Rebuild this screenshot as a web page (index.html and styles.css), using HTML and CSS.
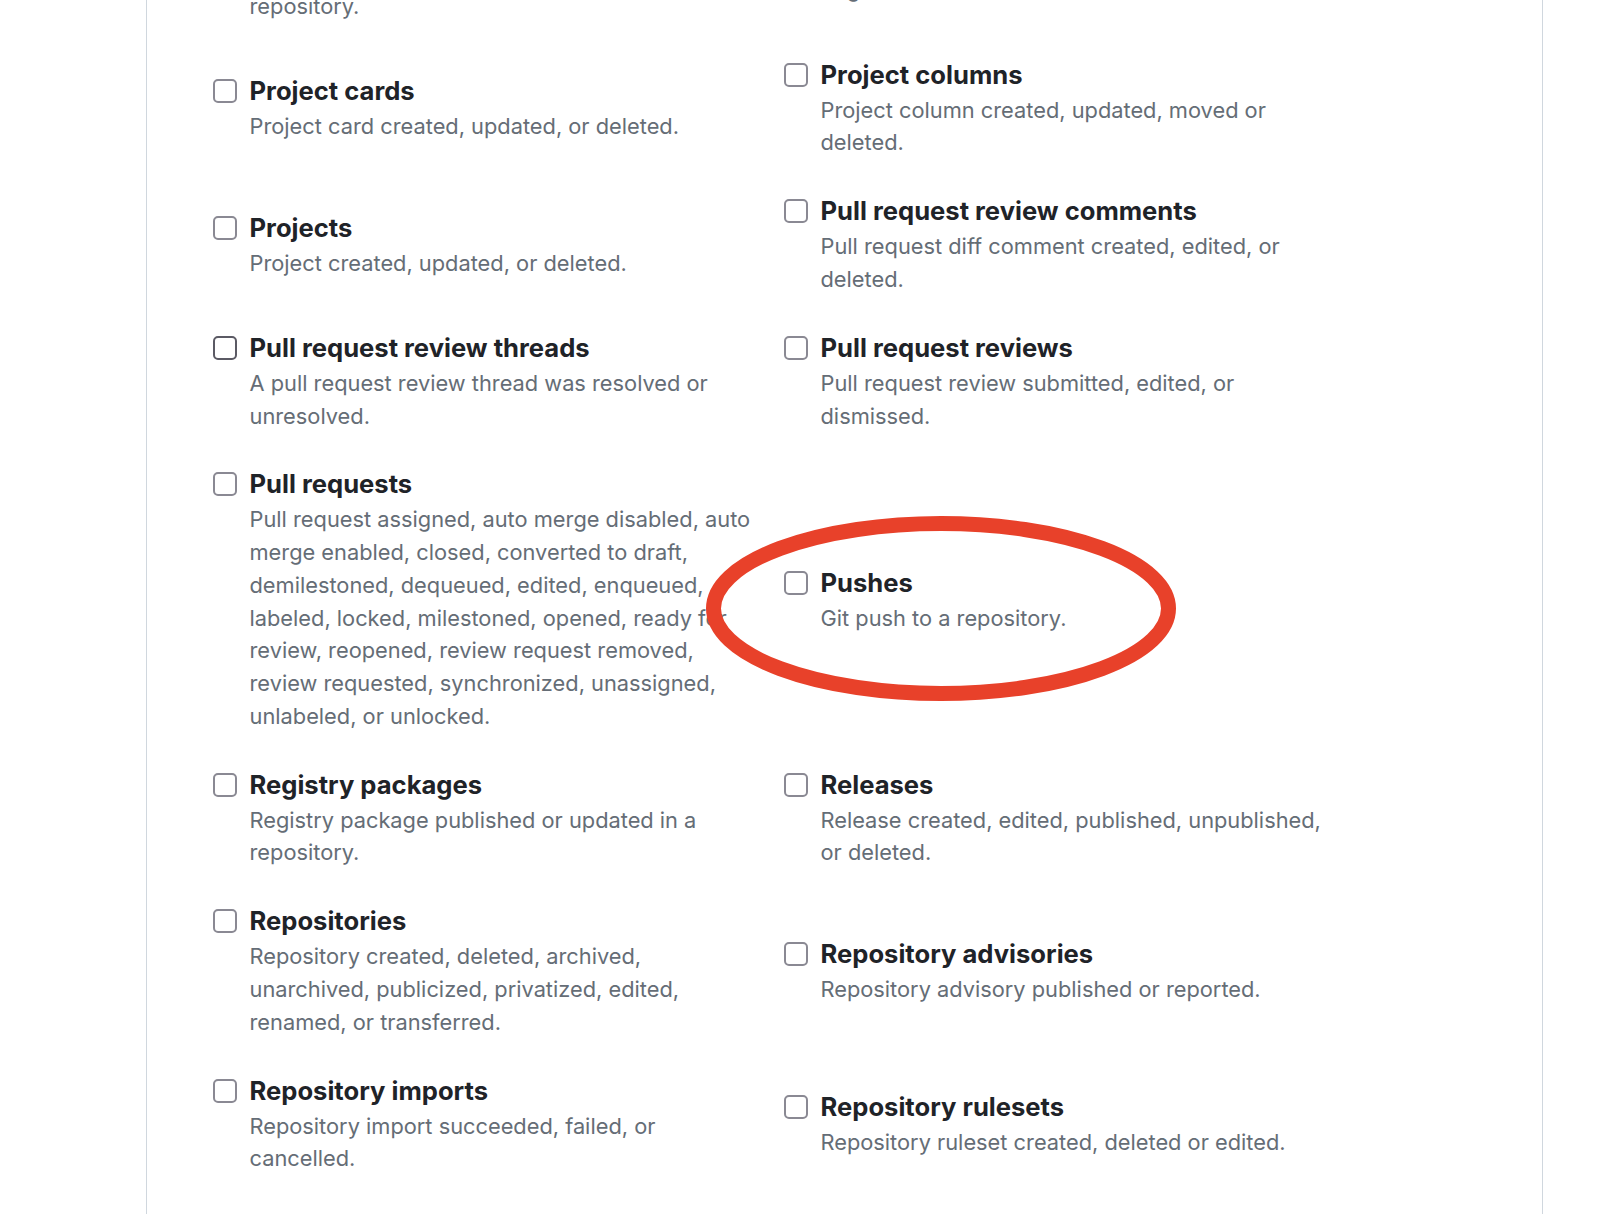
FILE: index.html
```html
<!DOCTYPE html>
<html lang="en">
<head>
<meta charset="utf-8">
<title>Webhook events</title>
<link rel="stylesheet" href="styles.css">
</head>
<body>
<div class="page">
  <div class="panel">
    <div class="events">
      <label class="event"><span class="box"></span><span class="text"><span class="name">Packages</span><span class="desc">GitHub Packages published or updated in a repository.</span></span></label>
      <label class="event"><span class="box"></span><span class="text"><span class="name">Page builds</span><span class="desc">Pages site built.</span></span></label>

      <label class="event"><span class="box"></span><span class="text"><span class="name">Project cards</span><span class="desc">Project card created, updated, or deleted.</span></span></label>
      <label class="event"><span class="box"></span><span class="text"><span class="name">Project columns</span><span class="desc">Project column created, updated, moved or deleted.</span></span></label>

      <label class="event"><span class="box"></span><span class="text"><span class="name">Projects</span><span class="desc">Project created, updated, or deleted.</span></span></label>
      <label class="event"><span class="box"></span><span class="text"><span class="name">Pull request review comments</span><span class="desc">Pull request diff comment created, edited, or deleted.</span></span></label>

      <label class="event"><span class="box box-hover"></span><span class="text"><span class="name">Pull request review threads</span><span class="desc">A pull request review thread was resolved or unresolved.</span></span></label>
      <label class="event"><span class="box"></span><span class="text"><span class="name">Pull request reviews</span><span class="desc">Pull request review submitted, edited, or dismissed.</span></span></label>

      <label class="event"><span class="box"></span><span class="text"><span class="name">Pull requests</span><span class="desc">Pull request assigned, auto merge disabled, auto merge enabled, closed, converted to draft, demilestoned, dequeued, edited, enqueued, labeled, locked, milestoned, opened, ready for review, reopened, review request removed, review requested, synchronized, unassigned, unlabeled, or unlocked.</span></span></label>
      <label class="event"><span class="box"></span><span class="text"><span class="name">Pushes</span><span class="desc">Git push to a repository.</span></span></label>

      <label class="event"><span class="box"></span><span class="text"><span class="name">Registry packages</span><span class="desc">Registry package published or updated in a repository.</span></span></label>
      <label class="event"><span class="box"></span><span class="text"><span class="name">Releases</span><span class="desc">Release created, edited, published, unpublished, or deleted.</span></span></label>

      <label class="event"><span class="box"></span><span class="text"><span class="name">Repositories</span><span class="desc">Repository created, deleted, archived, unarchived, publicized, privatized, edited, renamed, or transferred.</span></span></label>
      <label class="event"><span class="box"></span><span class="text"><span class="name">Repository advisories</span><span class="desc">Repository advisory published or reported.</span></span></label>

      <label class="event"><span class="box"></span><span class="text"><span class="name">Repository imports</span><span class="desc">Repository import succeeded, failed, or cancelled.</span></span></label>
      <label class="event"><span class="box"></span><span class="text"><span class="name">Repository rulesets</span><span class="desc">Repository ruleset created, deleted or edited.</span></span></label>
    </div>
  </div>
  <svg class="annotation" width="1620" height="1214" viewBox="0 0 1620 1214" aria-hidden="true">
    <ellipse cx="941" cy="608.5" rx="227.5" ry="85" fill="none" stroke="#e8412a" stroke-width="15"/>
  </svg>
</div>
</body>
</html>
```

FILE: styles.css
```css
html, body {
  margin: 0;
  padding: 0;
  background: #ffffff;
}

body {
  width: 1620px;
  height: 1214px;
  overflow: hidden;
  font-family: Inter, "Liberation Sans", Arial, sans-serif;
  -webkit-font-smoothing: antialiased;
}

.page {
  position: relative;
  width: 1620px;
  height: 1214px;
}

.panel {
  margin-left: 146px;
  width: 1329px;
  height: 1214px;
  border-left: 1px solid #d0d7de;
  border-right: 1px solid #d0d7de;
  padding-left: 66px;
  box-sizing: content-box;
  overflow: hidden;
}

.events {
  display: grid;
  grid-template-columns: 571px 571px;
  row-gap: 33.1px;
  align-items: center;
  margin-top: -81px;
}

.event {
  display: flex;
  align-items: flex-start;
  gap: 12.5px;
  cursor: pointer;
}

.box {
  flex: none;
  width: 24px;
  height: 24px;
  margin-top: 7px;
  box-sizing: border-box;
  border: 2.5px solid #8a8993;
  border-radius: 5px;
  background: #ffffff;
}

.box-hover {
  border-color: #5b5a64;
}

.text {
  display: block;
  max-width: 515px;
}

.name {
  display: block;
  font-size: 25.6px;
  line-height: 38px;
  font-weight: 700;
  color: #1f2328;
}

.desc {
  display: block;
  font-size: 21.8px;
  line-height: 32.75px;
  color: #656d76;
}

.annotation {
  position: absolute;
  left: 0;
  top: 0;
  pointer-events: none;
}
```
